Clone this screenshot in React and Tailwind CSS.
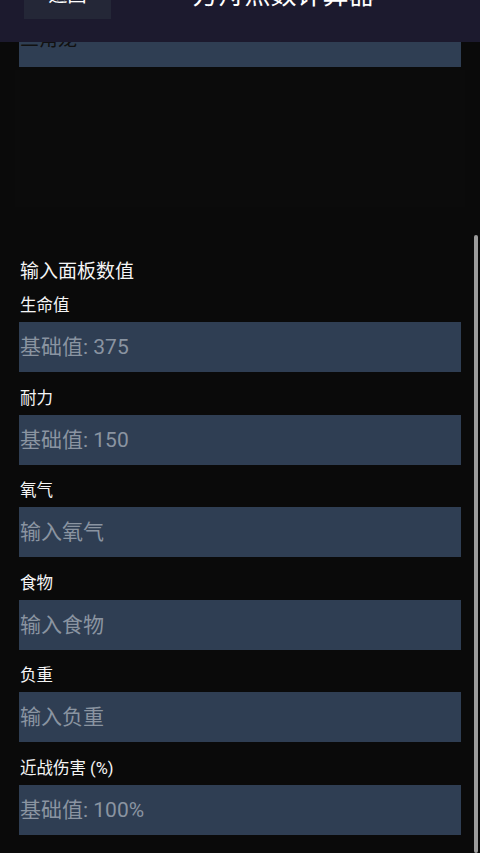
import React from "react";

const fields = [
  { label: "生命值", ph: "基础值: 375" },
  { label: "耐力", ph: "基础值: 150" },
  { label: "氧气", ph: "输入氧气" },
  { label: "食物", ph: "输入食物" },
  { label: "负重", ph: "输入负重" },
  { label: "近战伤害 (%)", ph: "基础值: 100%" },
];

export default function App() {
  return (
    <div
      className="relative w-[480px] h-[853px] overflow-hidden bg-[#0a0a0a]"
      style={{ fontFamily: "Roboto, 'Noto Sans CJK SC', sans-serif" }}
    >
      <header className="h-[42px] overflow-hidden bg-[#1c1a2e]">
        <div className="mt-[-29px] h-[48px] flex items-center px-6">
          <button className="w-[87px] h-[48px] bg-[#242737] text-white text-[19px] leading-none">
            返回
          </button>
          <div className="flex-1 text-center text-white text-[26px] leading-none">
            方舟点数计算器
          </div>
        </div>
      </header>

      <div className="px-[19px]">
        <div className="h-[25px] overflow-hidden bg-[#2f3e53]">
          <div className="mt-[-16px] pl-[1px] text-[19px] leading-[28px] text-[#111111]">
            三角龙
          </div>
        </div>

        <div className="mt-[3px] mx-[-4px] h-[137px] bg-[#0b0b0b]" />

        <div className="mt-[51px] text-[#f5f5f5] text-[19px] leading-[28px] pl-[1px]">
          输入面板数值
        </div>

        <div className="mt-[8px] flex flex-col gap-[14.6px]">
          {fields.map((f) => (
            <div key={f.label} className="flex flex-col">
              <label className="text-[#f5f5f5] text-[16.5px] leading-[24px] pl-[1px] mb-1">
                {f.label}
              </label>
              <input
                readOnly
                placeholder={f.ph}
                className="h-[50px] w-full bg-[#2f3e53] pl-[1px] text-[21px] text-white outline-none placeholder:text-[#8a94a1]"
              />
            </div>
          ))}
        </div>
      </div>

      <div className="absolute right-[2px] top-[235px] bottom-0 w-[4px] rounded-full bg-[#9c9c9c]" />
    </div>
  );
}
